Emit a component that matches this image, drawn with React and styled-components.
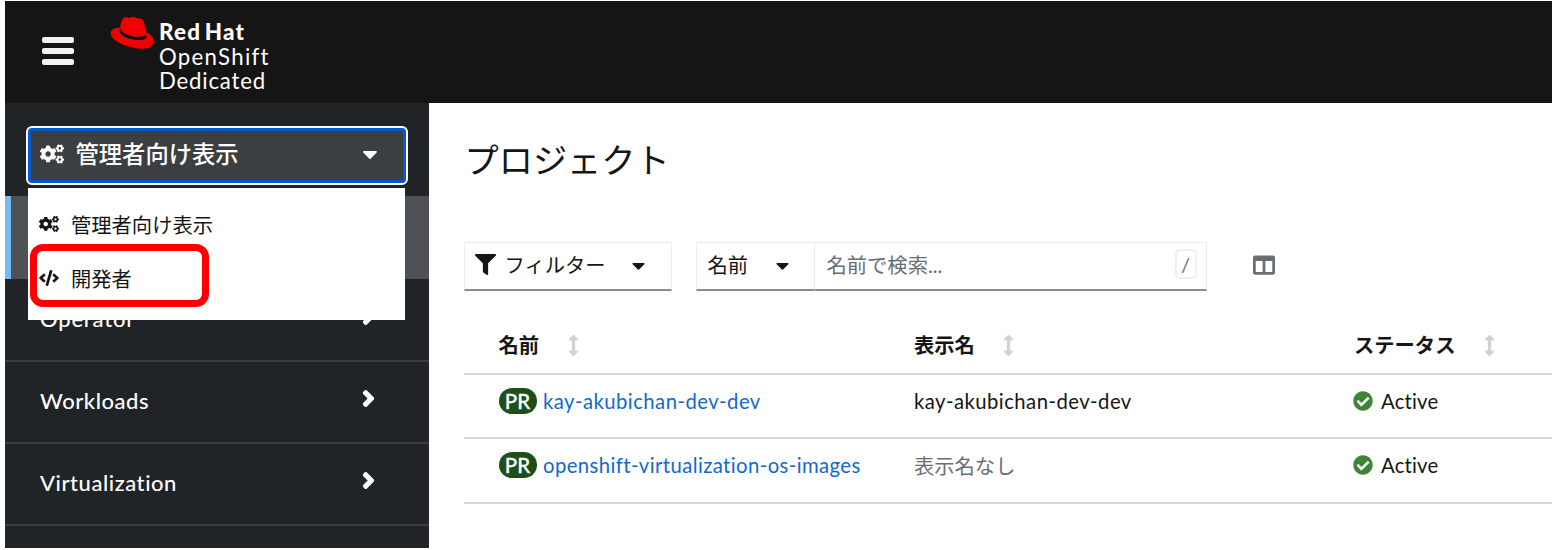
import React from "react";
import styled, { createGlobalStyle } from "styled-components";
import {
  FaCogs, FaCode, FaFilter, FaCaretDown, FaAngleRight,
  FaColumns, FaArrowsAltV, FaCheckCircle,
} from "react-icons/fa";

const Global = createGlobalStyle`
  * { box-sizing: border-box; }
  body { margin: 0; background: #fff; overflow: hidden; }
  svg { display: block; flex: none; }
`;

const Frame = styled.div`
  width: 1547px;
  height: 547px;
  margin: 1px 0 0 5px;
  overflow: hidden;
  display: flex;
  flex-direction: column;
  font-family: Lato, "Noto Sans CJK JP", sans-serif;
  font-size: 20.3px;
  color: #151515;
`;

const Masthead = styled.header`
  height: 102px;
  flex: none;
  background: #151515;
  display: flex;
  align-items: flex-start;
`;

const Burger = styled.button`
  width: 32px;
  margin: 36px 0 0 37px;
  padding: 0;
  border: 0;
  background: none;
  display: flex;
  flex-direction: column;
  gap: 5px;
`;

const Bar = styled.span`
  height: 6px;
  border-radius: 2px;
  background: #f2f2f2;
`;

const HatIcon = styled.svg`
  width: 44px;
  height: 34px;
  margin: 14px 0 0 35.5px;
`;

const Brand = styled.div`
  margin: 19px 0 0 5.5px;
  display: flex;
  flex-direction: column;
  color: #fff;
`;

const BrandLine = styled.span`
  height: 24.5px;
  line-height: 24.5px;
  font-size: ${(p) => p.$size || 22.2}px;
  font-weight: ${(p) => (p.$bold ? 900 : 400)};
  letter-spacing: ${(p) => p.$track || 0}px;
  word-spacing: ${(p) => (p.$bold ? -3 : 0)}px;
  white-space: nowrap;
`;

const Body = styled.div`
  flex: 1;
  display: flex;
  min-height: 0;
`;

const Sidebar = styled.aside`
  width: 423.5px;
  flex: none;
  background: #212427;
`;

const Switcher = styled.div`
  position: relative;
  height: 93px;
  padding: 23px 20px 0 20.5px;
`;

const Toggle = styled.button`
  width: 382px;
  height: 59px;
  padding: 0 24px 3px 12px;
  display: flex;
  align-items: center;
  color: #fff;
  font: 500 23.3px/50px Lato, "Noto Sans CJK JP", sans-serif;
  background: #3c3f42;
  border: 2px solid #fff;
  border-radius: 6px;
  box-shadow: inset 0 0 0 3px #0657d2;
  > svg:first-child { font-size: 24px; margin-right: 12px; }
  > svg:last-child { font-size: 24px; margin-left: auto; }
`;

const Menu = styled.ul`
  position: absolute;
  z-index: 2;
  left: 23px;
  top: 85px;
  width: 377px;
  height: 132px;
  margin: 0;
  padding: 9px 0 0;
  list-style: none;
  background: #fff;
`;

const MenuItem = styled.li`
  height: 54px;
  padding-left: 11px;
  display: flex;
  align-items: center;
  gap: 12px;
  svg { font-size: 20px; }
`;

const Highlight = styled.span`
  position: absolute;
  left: 2px;
  top: 56px;
  width: 179px;
  height: 63px;
  border: 7px solid #fe0000;
  border-radius: 13px;
`;

const NavItem = styled.div`
  height: 82px;
  padding: 0 48px 2px 35px;
  display: flex;
  align-items: center;
  justify-content: space-between;
  color: #fff;
  font-size: 22px;
  font-weight: 500;
  letter-spacing: ${(p) => p.$track}px;
  border-bottom: 2px solid #3c3f42;
  svg { font-size: 25px; stroke: currentColor; stroke-width: 24px; margin-bottom: 5px; }
`;

const ActiveSection = styled.div`
  height: 83px;
  margin-bottom: 1px;
  background: #4f5255;
  border-left: 6px solid #73bcf7;
`;

const NavLabel = styled.span`
  padding-bottom: 2px;
`;

const Main = styled.main`
  flex: 1;
  min-width: 0;
  padding-left: 35px;
`;

const Title = styled.h1`
  height: 139px;
  margin: 0;
  padding: 32px 0 0 1px;
  font-size: 34.2px;
  line-height: 50px;
  font-weight: 400;
  color: #151515;
`;

const Toolbar = styled.div`
  height: 78px;
  display: flex;
  align-items: flex-start;
`;

const Control = styled.div`
  width: ${(p) => p.$width}px;
  height: 48.5px;
  padding: 0 ${(p) => p.$right}px 4px 11px;
  display: flex;
  align-items: center;
  border: 1px solid #ededed;
  border-bottom: 2px solid #8a8d90;
  border-left-width: ${(p) => (p.$joined ? 0 : 1)}px;
  margin-left: ${(p) => p.$gap || 0}px;
  color: ${(p) => (p.$muted ? "#6a6e73" : "#151515")};
  > svg { color: #151515; font-size: 21px; }
  > svg:first-child { margin: 2px 9px 0 -1px; }
  > svg:last-child { margin: 4px 0 0 auto; }
`;

const Placeholder = styled.span`
  padding-left: 1px;
`;

const KeyHint = styled.kbd`
  width: 22px;
  height: 30px;
  margin: 0 -1px 0 auto;
  border: 2px solid #f0f0f0;
  border-radius: 5px;
  display: flex;
  align-items: center;
  justify-content: center;
  font: 20px/26px Lato, sans-serif;
  color: #6a6e73;
`;

const ColumnsButton = styled.span`
  margin: 12px 0 0 46px;
  color: #6a6e73;
  font-size: 22px;
`;

const Row = styled.div`
  display: grid;
  grid-template-columns: 415.5px 440px 1fr;
  height: ${(p) => p.$height}px;
  padding: 0 0 ${(p) => (p.$head ? 5 : 10)}px 35px;
  align-items: center;
  border-bottom: 2px solid #d8d8d8;
  font-weight: ${(p) => (p.$head ? 700 : 400)};
`;

const Cell = styled.div`
  display: flex;
  align-items: center;
  white-space: nowrap;
  letter-spacing: ${(p) => p.$track || 0}px;
  color: ${(p) => (p.$muted ? "#6a6e73" : "#151515")};
`;

const Sort = styled(FaArrowsAltV)`
  margin: 2px 0 0 23.5px;
  font-size: 21px;
  color: #d2d2d2;
`;

const Badge = styled.span`
  width: 38px;
  height: 26px;
  margin-right: 6.5px;
  border-radius: 13px;
  background: #1e4f18;
  color: #fff;
  text-align: center;
  font-size: 20.5px;
  font-weight: 500;
  -webkit-text-stroke: 0.3px #fff;
  line-height: 26px;
  letter-spacing: 0;
`;

const Link = styled.a`
  color: #0f69d0;
`;

const Check = styled(FaCheckCircle)`
  color: #3e8635;
  font-size: 20px;
  margin: 0 8px 0 -1px;
`;

const navItems = [
  ["Operator", 0.8],
  ["Workloads", 0.55],
  ["Virtualization", 0.55],
];
const columns = ["名前", "表示名", "ステータス"];
const projects = [
  { name: "kay-akubichan-dev-dev", display: "kay-akubichan-dev-dev", track: 0.46 },
  { name: "openshift-virtualization-os-images", track: 0.41 },
];

function Hat() {
  return (
    <HatIcon viewBox="28 28 132 102" aria-hidden="true">
      <path
        fill="#f00000"
        d="M58 66 C62 52 63 36 74 35 C82 34 83 38 89 36 C95 31 104 33 109 38 C120 37 128 42 131 53 L138 82 C151 86 159 95 159 106 C158 123 143 130 124 129 C93 128 34 112 30 84 C29 72 41 65 58 66Z"
      />
      <path
        fill="#000"
        d="M59 65 C57 78 76 90 100 93 C117 95 130 92 136 87 L138 96 C130 103 114 105 96 101 C70 96 55 85 57 72Z"
      />
    </HatIcon>
  );
}

export default function App() {
  return (
    <Frame>
      <Global />
      <Masthead>
        <Burger aria-label="メニュー"><Bar /><Bar /><Bar /></Burger>
        <Hat />
        <Brand>
          <BrandLine $bold $size={22.4} $track={1.2}>Red Hat</BrandLine>
          <BrandLine $track={1.3}>OpenShift</BrandLine>
          <BrandLine $track={0.8}>Dedicated</BrandLine>
        </Brand>
      </Masthead>
      <Body>
        <Sidebar>
          <Switcher>
            <Toggle><FaCogs />管理者向け表示<FaCaretDown /></Toggle>
            <Menu>
              <MenuItem><FaCogs />管理者向け表示</MenuItem>
              <MenuItem><FaCode />開発者</MenuItem>
              <Highlight />
            </Menu>
          </Switcher>
          <ActiveSection />
          {navItems.map(([label, track]) => (
            <NavItem key={label} $track={track}><NavLabel>{label}</NavLabel><FaAngleRight /></NavItem>
          ))}
        </Sidebar>
        <Main>
          <Title>プロジェクト</Title>
          <Toolbar>
            <Control $width={208.5} $right={22}><FaFilter />フィルター<FaCaretDown /></Control>
            <Control $width={119} $right={21} $gap={23.5}>名前<FaCaretDown /></Control>
            <Control $width={392} $right={10} $joined $muted>
              <Placeholder>名前で検索...</Placeholder><KeyHint>/</KeyHint>
            </Control>
            <ColumnsButton><FaColumns /></ColumnsButton>
          </Toolbar>
          <Row $head $height={55}>
            {columns.map((c) => <Cell key={c}>{c}<Sort /></Cell>)}
          </Row>
          {projects.map((p) => (
            <Row key={p.name} $height={64.3}>
              <Cell $track={p.track}><Badge>PR</Badge><Link>{p.name}</Link></Cell>
              <Cell $track={p.display ? 0.46 : 0} $muted={!p.display}>{p.display || "表示名なし"}</Cell>
              <Cell $track={0.2}><Check />Active</Cell>
            </Row>
          ))}
        </Main>
      </Body>
    </Frame>
  );
}
